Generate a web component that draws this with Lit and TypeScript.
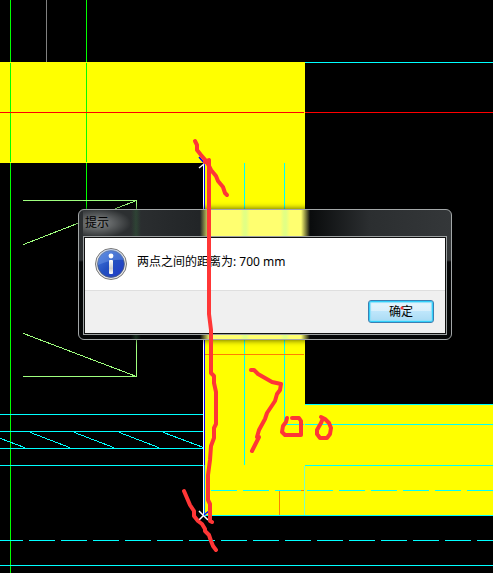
import { LitElement, html, svg, css } from "lit";
import { customElement, property } from "lit/decorators.js";

type Line = [x1: number, y1: number, x2: number, y2: number, tone: string, dash?: string];

// Horizontal and vertical lines sit on whole pixel rows; the group below shifts them by half a unit.
const LINES: Line[] = [
  [46, 0, 46, 61, "grey"],
  [10, 0, 10, 573, "green"],
  [86, 0, 86, 209, "green"],
  [305, 62, 493, 62, "cyan"],
  [0, 112, 303, 112, "red"],
  [305, 112, 493, 112, "red"],
  [23, 200, 136, 200, "lime"],
  [136, 200, 136, 376, "lime"],
  [23, 376, 136, 376, "lime"],
  [23, 244, 136, 200, "lime"],
  [23, 333, 136, 376, "lime"],
  [244, 163, 244, 464, "cyan"],
  [284, 163, 284, 424, "cyan"],
  [284, 424, 303, 424, "cyan"],
  [305, 424, 493, 424, "cyan"],
  [205, 354, 303, 354, "orange"],
  [305, 404, 493, 404, "cyan"],
  [305, 465, 493, 465, "cyan"],
  [304, 466, 304, 514, "pale"],
  [210, 490, 493, 490, "cyan", "26 6"],
  [301, 490, 303, 490, "orange"],
  [279, 491, 279, 514, "orange"],
  [205, 515, 493, 515, "cyan"],
  [0, 414, 203, 414, "cyan"],
  [0, 431, 203, 431, "cyan"],
  [0, 448, 203, 448, "cyan"],
  [0, 465, 203, 465, "cyan"],
  [0, 438, 24, 447, "cyan"],
  [30, 432, 69, 447, "cyan"],
  [74, 432, 113, 447, "cyan"],
  [119, 432, 158, 447, "cyan"],
  [163, 432, 203, 447, "cyan"],
  [-4, 540, 493, 540, "cyan", "26 6"],
  [0, 565, 493, 565, "cyan"],
  [203, 163, 203, 515, "white"],
  [204, 163, 204, 465, "blue"],
  [204, 465, 204, 515, "azure"],
];

// Yellow nicks where the green axes cross the wall outline and its centre line.
const GAPS: [number, number][] = [
  [10, 62], [86, 62], [10, 162], [86, 162],
];

const STROKES = [
  "195,141 197,145 197,150 201,155 207,162 211,170 216,176 218,181 223,187 225,193 227,195",
  "205,162 209,160 209,314 211,330 211,373 214,376 214,383 216,392 216,424 214,428 214,438 211,446 210,460 208,475 208,500 210,504 210,521 212,522",
  "184,491 187,498 190,505 194,511 194,516 198,521 202,524 205,529 205,531 209,535 211,541 213,546 216,550",
  "251,370 254,370 258,374 272,382 281,384 280,390 277,394 275,401 267,413 265,419 259,430 257,437 259,437 255,445 252,451",
  "287,418 286,422 283,426 282,432 285,435 301,435 301,421 299,418 292,418",
  "321,417 325,419 329,423 331,428 330,434 327,438 320,438 317,434 317,430 321,423 323,418",
];

@customElement("cad-drawing")
export class CadDrawing extends LitElement {
  static styles = css`
    :host { display: block; }
    svg { display: block; width: 100%; height: auto; }
    .lines { shape-rendering: crispEdges; fill: none; stroke-width: 1; }
    .solid { stroke-linecap: square; }
    .fill { fill: #ffff00; stroke: none; shape-rendering: crispEdges; }
    .grey { stroke: #808080; }
    .green { stroke: #00ff00; }
    .cyan { stroke: #00ffff; }
    .red { stroke: #ff0000; }
    .lime { stroke: #9fff7f; }
    .orange { stroke: #ff7f00; }
    .pale { stroke: #7fffbf; }
    .white { stroke: #ffffff; }
    .blue { stroke: #0000ff; }
    .azure { stroke: #007fff; }
    .mark { stroke-width: 1.5; fill: none; }
  `;

  render() {
    return html`
      <svg viewBox="0 0 493 573" aria-hidden="true">
        <path class="fill" d="M0 62H305V404H493V516H205V163H0Z" />
        <g class="lines" transform="translate(.5 .5)">
          ${LINES.map(([x1, y1, x2, y2, tone, dash]) => svg`
            <path class="${tone} ${dash ? "" : "solid"}" d="M${x1} ${y1}L${x2} ${y2}" stroke-dasharray=${dash ?? "none"} />`)}
        </g>
        ${GAPS.map(([x, y]) => svg`<rect class="fill" x=${x} y=${y} width="1" height="1" />`)}
        <path class="mark blue" d="M199 157L205 164" />
        <path class="mark white" d="M199 168L204 164" />
        <path class="mark white" d="M199 511L208 520M199 520L204 515" />
        <path class="mark blue" d="M204 515L209 511" />
      </svg>
    `;
  }
}

@customElement("pen-marks")
export class PenMarks extends LitElement {
  static styles = css`
    :host { display: block; pointer-events: none; }
    svg { display: block; width: 100%; height: auto; }
    polyline {
      fill: none;
      stroke: #ff3636;
      stroke-width: 4;
      stroke-linecap: round;
      stroke-linejoin: round;
    }
    circle { fill: #ff3636; }
  `;

  render() {
    return html`
      <svg viewBox="0 0 493 573" aria-hidden="true">
        ${STROKES.map((points) => svg`<polyline points=${points} />`)}
        <circle cx="402" cy="308" r="1.5" />
      </svg>
    `;
  }
}

@customElement("message-box")
export class MessageBox extends LitElement {
  @property() heading = "";
  @property() message = "";

  static styles = css`
    :host {
      display: block;
      box-sizing: border-box;
      border: 1px solid #a3a7a8;
      border-radius: 6px;
      box-shadow: 0 0 6px rgba(0, 0, 0, 0.7);
      padding: 0 4px 4px;
      font: 12px/16px "Noto Sans", "Noto Sans CJK SC", sans-serif;
      color: #000;
      background:
        linear-gradient(90deg, transparent 161px, #e2ff84 165px 167px, transparent 171px),
        linear-gradient(90deg, transparent 201px, #e2ff84 205px 207px, transparent 211px),
        linear-gradient(90deg, transparent 121px, #ffff70 131px 222px, transparent 231px),
        linear-gradient(90deg, transparent 52px, rgba(50, 100, 60, 0.4) 57px, transparent 62px),
        linear-gradient(transparent 50px, #050607 52px),
        linear-gradient(90deg, #2c2f31, #2c2f31 50px, #222527 120px, #0a0c0d 232px, #2b2e30 290px, #343739);
    }
    .title {
      margin: 0;
      padding: 5px 2px;
      font: inherit;
      width: 64px;
      background: radial-gradient(ellipse 34px 15px at 14px 13px, #858788, #606364 45%, transparent);
    }
    .frame {
      border: 1px solid #9da1a2;
      background: #111;
      padding: 1px;
    }
    .body {
      display: flex;
      gap: 10px;
      padding: 10px;
      background: #fff;
      border-bottom: 1px solid #dfdfdf;
    }
    .icon { flex: none; width: 32px; height: 32px; }
    .text { margin: 0; line-height: 28px; }
    .actions {
      display: flex;
      justify-content: flex-end;
      padding: 9px 11px 10px;
      background: #f0f0f0;
    }
    button {
      box-sizing: border-box;
      width: 66px;
      height: 23px;
      padding: 0;
      border: 1px solid #3c7fb1;
      border-radius: 3px;
      box-shadow: inset 0 0 0 1px #32d0fa, inset 0 0 1px 2px #90e0fa;
      background: linear-gradient(#e8f5fc, #d8effb 50%, #bee6fb 50%, #a9daf3);
      font: inherit;
      color: inherit;
    }
  `;

  render() {
    return html`
      <h1 class="title">${this.heading}</h1>
      <div class="frame">
        <div class="body">
          <svg class="icon" viewBox="0 0 32 32" aria-hidden="true">
            <defs>
              <linearGradient id="ball" x1="0" y1="0" x2="1" y2="1">
                <stop offset="0" stop-color="#4b7fe0" />
                <stop offset=".5" stop-color="#2350c0" />
                <stop offset="1" stop-color="#2038c8" />
              </linearGradient>
              <linearGradient id="stem" x1="0" y1="0" x2="0" y2="1">
                <stop offset="0" stop-color="#ffffff" />
                <stop offset=".6" stop-color="#cfcfcf" />
                <stop offset="1" stop-color="#ffffff" />
              </linearGradient>
            </defs>
            <circle cx="16" cy="16" r="15.5" fill="#e6e6e6" stroke="#777" />
            <circle cx="16" cy="16" r="13.4" fill="url(#ball)" stroke="#51607c" stroke-width=".8" />
            <path d="M3 17A13 13 0 0 1 29 12Q17 11 3 17Z" fill="#7da4ec" opacity=".4" />
            <circle cx="16" cy="8" r="2.4" fill="#fff" />
            <rect x="14" y="12" width="4" height="14" rx="1" fill="url(#stem)" />
          </svg>
          <p class="text">${this.message}</p>
        </div>
        <div class="actions"><button type="button">确定</button></div>
      </div>
    `;
  }
}

@customElement("app-root")
export class AppRoot extends LitElement {
  static styles = css`
    :host {
      display: block;
      position: relative;
      min-height: 100vh;
      background: #000;
    }
    message-box {
      position: absolute;
      top: 209px;
      left: 78px;
      right: 41px;
    }
    pen-marks {
      position: absolute;
      inset: 0;
    }
  `;

  render() {
    return html`
      <cad-drawing></cad-drawing>
      <message-box role="dialog" aria-label="提示" heading="提示" message="两点之间的距离为: 700 mm"></message-box>
      <pen-marks></pen-marks>
    `;
  }
}
